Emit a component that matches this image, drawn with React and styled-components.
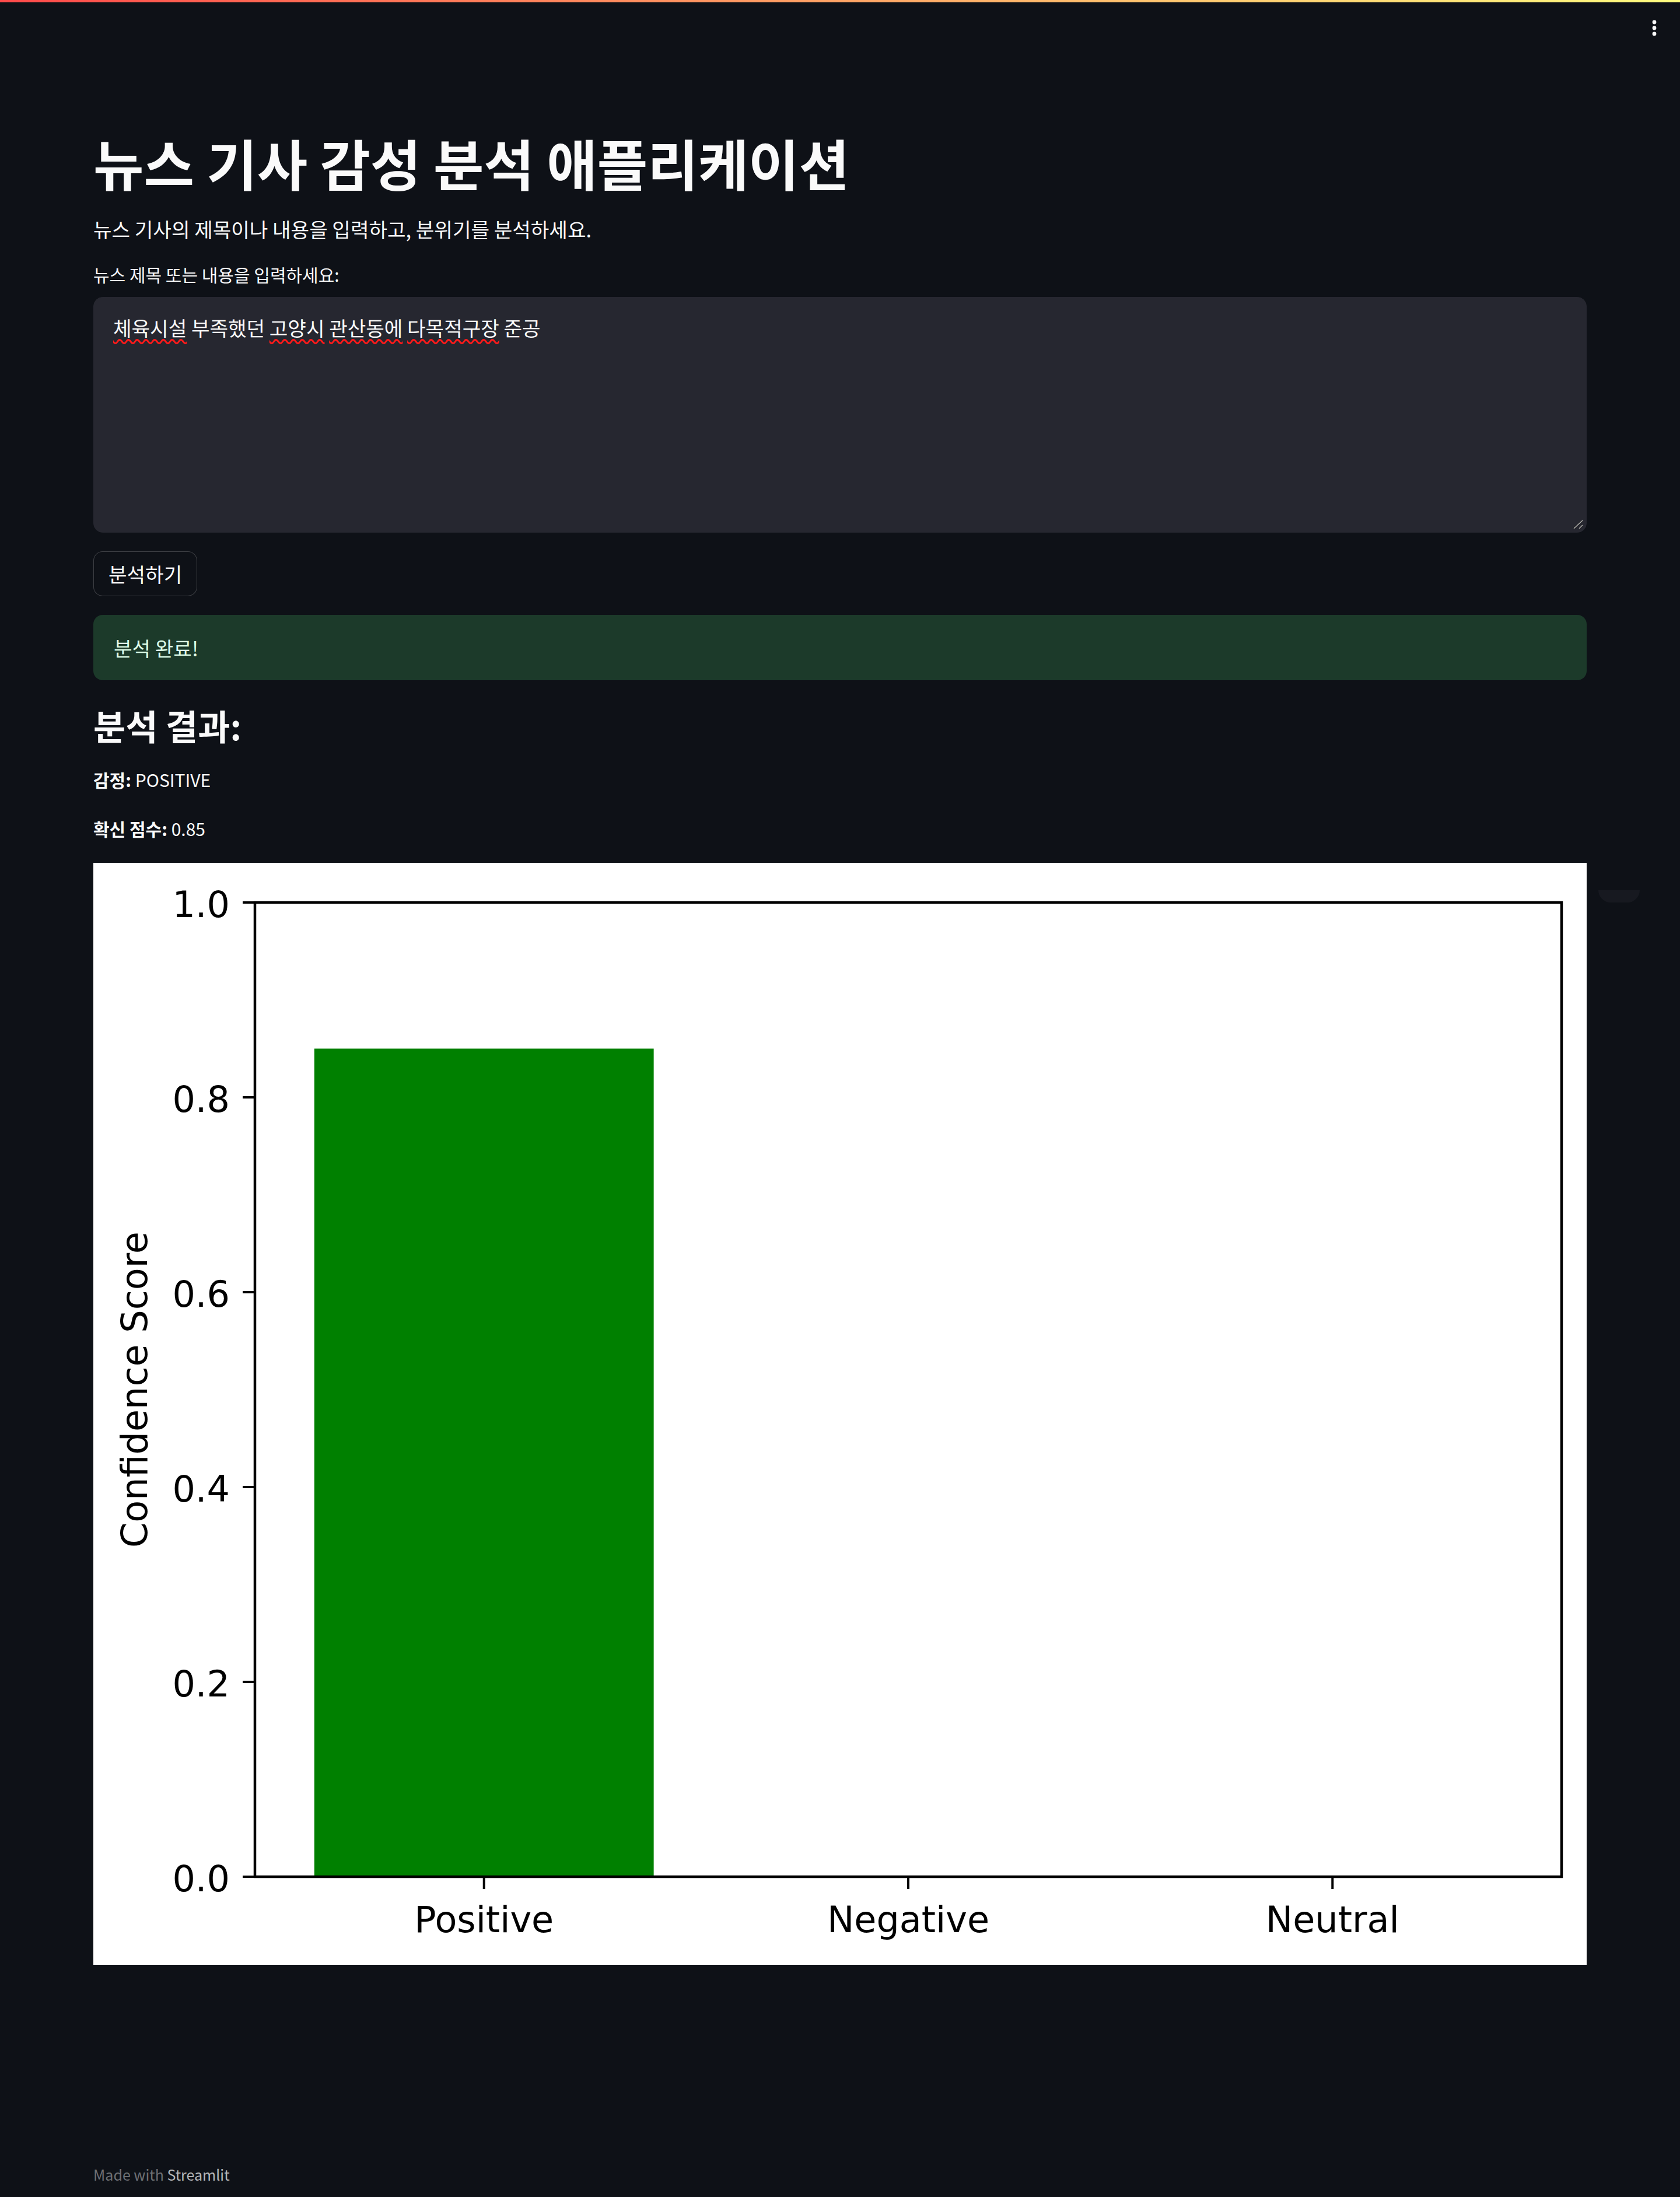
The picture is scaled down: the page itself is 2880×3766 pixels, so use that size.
import styled, { createGlobalStyle } from 'styled-components'

const GlobalStyle = createGlobalStyle`
  html, body {
    margin: 0;
    padding: 0;
    background: #0e1117;
  }
  body {
    color: #fafafa;
    font-family: "Noto Sans CJK KR", "Noto Sans", sans-serif;
  }
`

const Page = styled.div`
  width: 2880px;
  min-height: 3766px;
  background: #0e1117;
`

const Decoration = styled.div`
  height: 4px;
  background: linear-gradient(90deg, rgb(255, 75, 75), rgb(255, 253, 128));
`

const Header = styled.header`
  height: 116px;
  display: flex;
  justify-content: flex-end;
  align-items: flex-start;
  padding: 24px 24px 0 0;
  box-sizing: border-box;
`

const MenuButton = styled.div`
  width: 40px;
  height: 40px;
  display: flex;
  align-items: center;
  justify-content: center;
`

const Main = styled.main`
  padding: 0 160px;
  display: flex;
  flex-direction: column;
`

const Title = styled.h1`
  margin: 105px 0 0;
  font-size: 94px;
  line-height: 106px;
  font-weight: 700;
`

const Text = styled.p`
  margin: ${p => p.$top}px 0 0;
  font-size: ${p => p.$size || 34.3}px;
  line-height: ${p => p.$lh || 51}px;
  font-weight: 400;
  b { font-weight: 700; }
`

const TextArea = styled.div`
  position: relative;
  margin-top: 19px;
  height: 404px;
  box-sizing: border-box;
  background: #262730;
  border: 1px solid #262730;
  border-radius: 16px;
  padding: 26px 33px;
  font-size: 34.3px;
  line-height: 51px;
  color: #fafafa;
`

const Typo = styled.span`
  text-decoration: underline wavy #ff1a1a;
  text-decoration-thickness: 3px;
  text-underline-offset: 5px;
  text-decoration-skip-ink: none;
`

const Grip = styled.svg`
  position: absolute;
  right: 2px;
  bottom: 2px;
`

const Button = styled.button`
  align-self: flex-start;
  margin-top: 32px;
  height: 77px;
  padding: 0 25px;
  background: #0e1117;
  color: #fafafa;
  border: 1px solid rgba(250, 250, 250, 0.2);
  border-radius: 16px;
  font-family: inherit;
  font-size: 34.3px;
  line-height: 51px;
`

const Alert = styled.div`
  margin-top: 32px;
  height: 112px;
  box-sizing: border-box;
  padding: 30px 35px;
  background: #1c3a2a;
  color: #dffde9;
  border-radius: 16px;
  font-size: 34.3px;
  line-height: 52px;
`

const SubHeading = styled.h3`
  margin: 41px 0 0;
  font-size: 60px;
  line-height: 72px;
  font-weight: 700;
`

const ChartBox = styled.div`
  position: relative;
  margin-top: 37px;
  width: 2560px;
  height: 1889px;
  background: #fff;
  svg { display: block; }
`

const ToolbarHint = styled.div`
  position: absolute;
  left: 2580px;
  top: 47px;
  width: 71px;
  height: 21px;
  border-radius: 0 0 36px 36px;
  background: #171920;
`

const Footer = styled.footer`
  margin-top: 340px;
  font-size: 25px;
  line-height: 38px;
  color: rgba(250, 250, 250, 0.42);
  span { color: rgba(250, 250, 250, 0.72); }
`

const data = [
  { label: 'Positive', value: 0.85 },
  { label: 'Negative', value: 0 },
  { label: 'Neutral', value: 0 },
]

const Chart = () => {
  const left = 277, top = 68, right = 2517, bottom = 1738
  const unit = (right - left) / 3.08
  const xOf = i => left + (i + 0.54) * unit
  const yOf = v => bottom - v * (bottom - top)
  const chartFont = { fontFamily: '"DejaVu Sans", sans-serif', fontSize: 62, fill: '#000' }
  return (
    <svg width="2560" height="1889" viewBox="0 0 2560 1889">
      {data.map((d, i) => (
        <rect key={d.label} x={xOf(i) - 0.4 * unit} y={yOf(d.value)} width={0.8 * unit} height={bottom - yOf(d.value)} fill="#008000" />
      ))}
      <rect x={left} y={top} width={right - left} height={bottom - top} fill="none" stroke="#000" strokeWidth="4.5" />
      {[0, 0.2, 0.4, 0.6, 0.8, 1.0].map(v => (
        <g key={v}>
          <line x1={left - 21} x2={left} y1={yOf(v)} y2={yOf(v)} stroke="#000" strokeWidth="4" />
          <text x={234} y={yOf(v) + 25} textAnchor="end" style={chartFont}>{v.toFixed(1)}</text>
        </g>
      ))}
      {data.map((d, i) => (
        <g key={d.label}>
          <line x1={xOf(i)} x2={xOf(i)} y1={bottom} y2={bottom + 21} stroke="#000" strokeWidth="4" />
          <text x={xOf(i)} y={1833} textAnchor="middle" style={chartFont}>{d.label}</text>
        </g>
      ))}
      <text x={92} y={903} transform="rotate(-90 92 903)" textAnchor="middle" style={chartFont}>Confidence Score</text>
    </svg>
  )
}

const App = () => {
  return (
    <Page>
      <GlobalStyle />
      <Decoration />
      <Header>
        <MenuButton>
          <svg width="40" height="40" viewBox="0 0 40 40">
            <circle cx="20" cy="10" r="3.4" fill="#fafafa" />
            <circle cx="20" cy="20" r="3.4" fill="#fafafa" />
            <circle cx="20" cy="30" r="3.4" fill="#fafafa" />
          </svg>
        </MenuButton>
      </Header>
      <Main>
        <Title>뉴스 기사 감성 분석 애플리케이션</Title>
        <Text $top={36}>뉴스 기사의 제목이나 내용을 입력하고, 분위기를 분석하세요.</Text>
        <Text $top={32} $size={30} $lh={40}>뉴스 제목 또는 내용을 입력하세요:</Text>
        <TextArea>
          <Typo>체육시설</Typo> 부족했던 <Typo>고양시</Typo> <Typo>관산동에</Typo> <Typo>다목적구장</Typo> 준공
          <Grip width="22" height="22" viewBox="0 0 22 22">
            <line x1="3" y1="18" x2="18" y2="4" stroke="#1a1a1a" strokeWidth="3" />
            <line x1="3" y1="18" x2="18" y2="4" stroke="#b8b8b8" strokeWidth="1.5" />
            <line x1="12" y1="18" x2="18" y2="12" stroke="#1a1a1a" strokeWidth="3" />
            <line x1="12" y1="18" x2="18" y2="12" stroke="#b8b8b8" strokeWidth="1.5" />
          </Grip>
        </TextArea>
        <Button>분석하기</Button>
        <Alert>분석 완료!</Alert>
        <SubHeading>분석 결과:</SubHeading>
        <Text $top={35} $size={30} $lh={44}><b>감정:</b> POSITIVE</Text>
        <Text $top={40} $size={30} $lh={44}><b>확신 점수:</b> 0.85</Text>
        <ChartBox>
          <Chart />
          <ToolbarHint />
        </ChartBox>
        <Footer>Made with <span>Streamlit</span></Footer>
      </Main>
    </Page>
  )
}

export default App
